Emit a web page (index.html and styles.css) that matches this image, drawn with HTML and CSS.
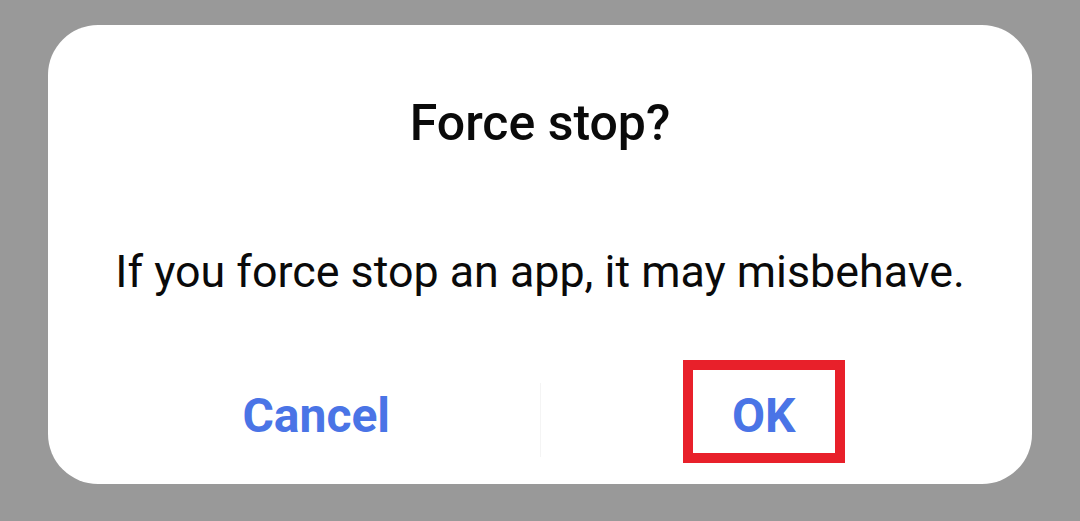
FILE: index.html
```html
<!DOCTYPE html>
<html lang="en">
<head>
<meta charset="utf-8">
<title>Force stop?</title>
<link rel="stylesheet" href="styles.css">
</head>
<body>
<div class="dialog">
  <h1 class="title">Force stop?</h1>
  <p class="message">If you force stop an app, it may misbehave.</p>
  <div class="actions">
    <div class="action"><span class="label">Cancel</span></div>
    <div class="divider"></div>
    <div class="action"><span class="label highlight">OK</span></div>
  </div>
</div>
</body>
</html>
```

FILE: styles.css
```css
html, body {
  margin: 0;
  padding: 0;
  background: #999999;
  height: 100%;
}
body {
  padding: 25px 48px 0 48px;
  box-sizing: border-box;
  font-family: Roboto, "Liberation Sans", sans-serif;
}
.dialog {
  background: #ffffff;
  border-radius: 50px;
  height: 459px;
  box-sizing: border-box;
  padding-top: 68px;
  display: flex;
  flex-direction: column;
  align-items: center;
}
.title {
  margin: 0;
  font-size: 50px;
  line-height: 60px;
  font-weight: 500;
  color: #0a0a0a;
}
.message {
  margin: 92px 0 0 0;
  font-size: 44.8px;
  line-height: 54px;
  font-weight: 400;
  color: #0a0a0a;
}
.actions {
  align-self: stretch;
  margin-top: 61px;
  padding: 0 45px;
  display: grid;
  grid-template-columns: 1fr 1px 1fr;
  align-items: start;
}
.action {
  display: flex;
  justify-content: center;
}
.label {
  display: inline-block;
  font-size: 48px;
  line-height: 60px;
  font-weight: 700;
  color: #4a74e6;
  padding: 16px 39px 7px 39px;
  border: 10px solid transparent;
}
.highlight {
  border-color: #e8202a;
}
.divider {
  margin-top: 23px;
  height: 74px;
  background: #f4f4f4;
}
```
